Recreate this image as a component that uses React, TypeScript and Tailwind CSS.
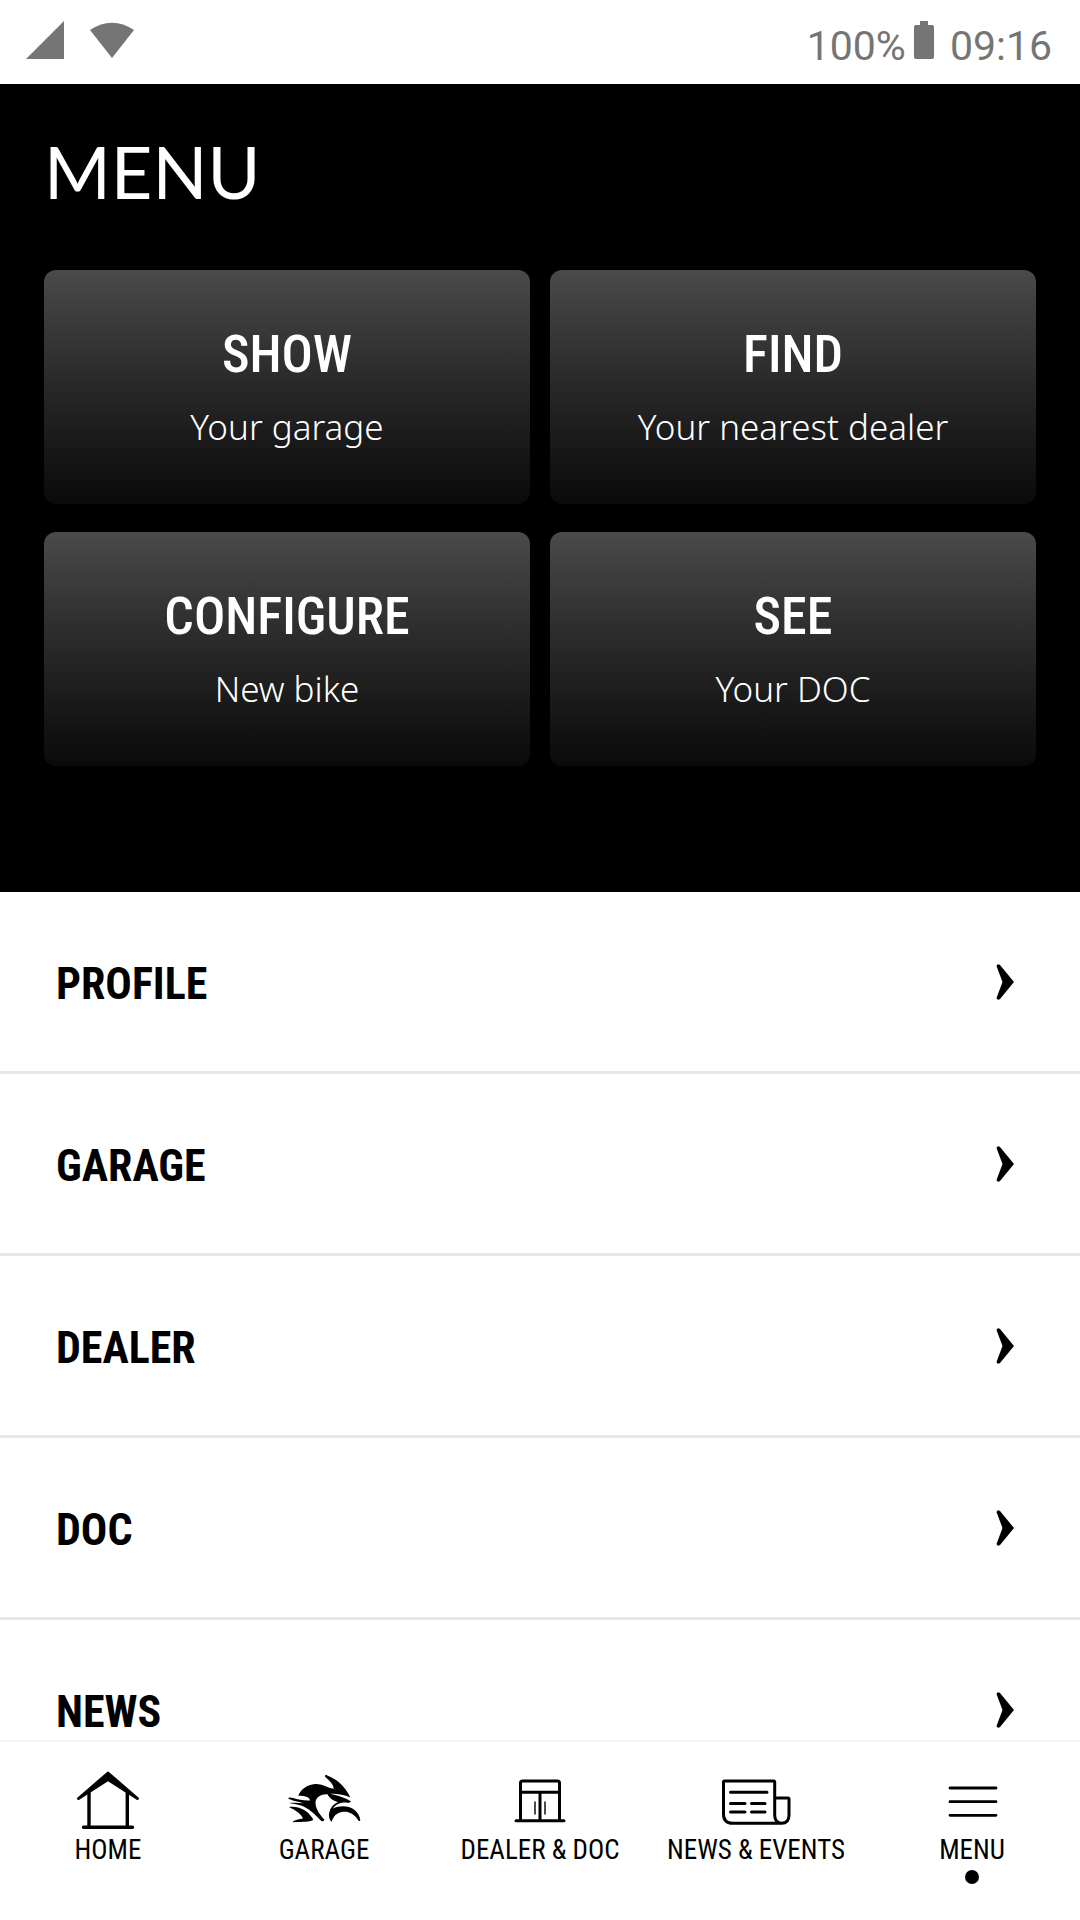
import type { ReactNode } from "react";

const quickLinks = [
  { title: "SHOW", subtitle: "Your garage" },
  { title: "FIND", subtitle: "Your nearest dealer" },
  { title: "CONFIGURE", subtitle: "New bike" },
  { title: "SEE", subtitle: "Your DOC" },
];

const menuItems = ["PROFILE", "GARAGE", "DEALER", "DOC", "NEWS"];

function NavIcon({ children }: { children: ReactNode }) {
  return (
    <svg
      viewBox="0 0 80 70"
      className="h-[70px] w-20"
      fill="none"
      stroke="currentColor"
      strokeWidth="3"
      strokeLinecap="round"
      strokeLinejoin="round"
      aria-hidden="true"
    >
      {children}
    </svg>
  );
}

const tabs = [
  {
    label: "HOME",
    icon: (
      <NavIcon>
        <path d="M40 9 L10.5 34.5 L40 15.5 L69.5 34.5 Z" fill="currentColor" strokeWidth="2.8" />
        <path d="M21 28 V63 M59.3 28 V63 M15.5 63.3 H64.5" strokeWidth="3.4" />
      </NavIcon>
    ),
  },
  {
    label: "GARAGE",
    icon: (
      <NavIcon>
        <g fill="currentColor" stroke="none">
          <path d="M14.3 31.7 C17 25 23 21 31 20 C37 19.5 42 23 49.5 24.8 C50.5 22 46 17 41.3 13 C40.3 11.5 41.5 10.5 43.2 11.5 C54 15.5 62 24 66.3 33.5 C60 30.5 53 29.5 46 29.8 C54 31.5 62 34 67 37.5 C66 39 64 39 62 38.6 C56 38.5 52 40.5 49 44.5 C55 41.5 64 41.2 70 45.5 C74 48.5 76 52.5 76.3 56.5 C75.5 57.5 74.5 57 74 56 C70 49.5 64 47 58 48 C52 49 49.5 52.5 47.5 58 C45.5 55.5 44.3 52.5 45.3 48.5 C46 44 49 40.5 54 38 C49 37 45 33.5 43.5 30.3 C37 30 32 33 31.5 38.5 C31.5 45 36 51 40.3 55.5 C40 57.5 38 57.8 36.5 56.3 C31 50 24 44 17 41.5 C13 40.3 9 39.8 5 39 C10 38.3 15 38.8 20 39.3 C14 37.5 7 36.5 4.3 34.5 C4.5 33 7 33.3 9 34 C14 35.7 20 36.8 26 36.5 C26 33.5 22 31.7 14.3 31.7 Z" />
          <path d="M5 43 C13 42 21 45 26 51 C28 53.5 30 55 28.5 56.5 C23 58.5 16 57.5 9 58.3 C8.5 57 11 56 19 54.5 C17 49.5 11 46 5 43 Z" />
        </g>
      </NavIcon>
    ),
  },
  {
    label: "DEALER & DOC",
    icon: (
      <NavIcon>
        <path d="M20.5 56 V19 Q20.5 17 22.5 17 H57.5 Q59.5 17 59.5 19 V56 M20.5 28.3 H59.5 M40 28.3 V56 M16 56.7 H64" />
        <path d="M35 38 V50 M45 38 V50" strokeWidth="1.4" />
      </NavIcon>
    ),
  },
  {
    label: "NEWS & EVENTS",
    icon: (
      <NavIcon>
        <path d="M58.7 51 V18 Q58.7 17 57.7 17 H8.5 Q7.5 17 7.5 18 V50 Q7.5 59.3 16.5 59.3 H65.5 Q58.7 58.5 58.7 51 M58.7 34 H72 Q73 34 73 35 V51 Q73 59.3 65.5 59.3" />
        <path d="M14.5 28.3 H51 M14.5 39.5 H29 M35.5 39.5 H49 M14.5 48 H29 M35.5 48 H49" />
      </NavIcon>
    ),
  },
  {
    label: "MENU",
    active: true,
    icon: (
      <NavIcon>
        <path d="M18 24 H64 M18 37.7 H64 M18 51.3 H64" strokeWidth="2.8" />
      </NavIcon>
    ),
  },
];

function StatusBar() {
  return (
    <div className="flex h-[84px] shrink-0 items-center justify-between bg-white pr-7 pl-[26px] font-[Roboto,sans-serif] text-[#757575]">
      <div className="flex items-center gap-6 pb-1">
        <svg viewBox="0 0 38 38" className="size-[38px]" fill="currentColor" aria-hidden="true">
          <path d="M0 38 L38 0 V38 Z" />
        </svg>
        <svg viewBox="0 0 48 38" className="h-[38px] w-12" fill="currentColor" aria-hidden="true">
          <path d="M2 9 Q24 -5.5 46 9 L24 37 Z" />
        </svg>
      </div>
      <div className="flex items-center gap-2 text-[41px] leading-[48px]">
        <span className="pt-2">100%</span>
        <svg viewBox="0 0 20 38" className="mb-1 h-[38px] w-5" fill="currentColor" aria-hidden="true">
          <path d="M6 0 H14 V4 H18 Q20 4 20 6 V36 Q20 38 18 38 H2 Q0 38 0 36 V6 Q0 4 2 4 H6 Z" />
        </svg>
        <span className="pt-2 pl-2">09:16</span>
      </div>
    </div>
  );
}

function QuickLinks() {
  return (
    <section className="bg-black px-11 pt-12 pb-[126px] text-white">
      <h1 className="font-[Lato,sans-serif] text-[72px] leading-[78px]">MENU</h1>
      <div className="mt-15 grid grid-cols-2 gap-x-5 gap-y-7">
        {quickLinks.map((link) => (
          <button
            key={link.title}
            type="button"
            className="flex h-[234px] flex-col items-center justify-center gap-3 rounded-xl bg-linear-to-b from-[#4a4a4a] to-[#0a0a0a] pt-2"
          >
            <span className="text-[52px] leading-[60px] font-medium">{link.title}</span>
            <span className="font-['Noto_Sans',sans-serif] text-[35px] leading-[60px] font-light">
              {link.subtitle}
            </span>
          </button>
        ))}
      </div>
    </section>
  );
}

function MenuList() {
  return (
    <ul>
      {menuItems.map((item) => (
        <li key={item} className="border-b-3 border-[#e8e8e8]">
          <a href="#" className="flex h-[179px] items-center justify-between pr-[66px] pl-14 text-black">
            <span className="pt-1 text-[44px] leading-[52px] font-bold">{item}</span>
            <svg viewBox="0 0 18 36" className="h-9 w-[18px]" fill="currentColor" aria-hidden="true">
              <path d="M0.5 2 Q1.5 -0.8 4 1 L18 18 L4 35 Q1.5 36.8 0.5 34 L6.5 18 Z" />
            </svg>
          </a>
        </li>
      ))}
    </ul>
  );
}

function BottomNav() {
  return (
    <nav className="grid shrink-0 grid-cols-5 border-t-2 border-[#f5f5f5] bg-white pt-[22px] pb-9">
      {tabs.map((tab) => (
        <a key={tab.label} href="#" className="flex flex-col items-center text-black">
          {tab.icon}
          <span className="text-[27px] leading-8 whitespace-nowrap">{tab.label}</span>
          <span className={tab.active ? "mt-1 size-3.5 rounded-full bg-black" : "mt-1 size-3.5"} />
        </a>
      ))}
    </nav>
  );
}

export default function App() {
  return (
    <div className="flex h-screen flex-col bg-white font-['Roboto_Condensed',Roboto,sans-serif]">
      <StatusBar />
      <main className="min-h-0 flex-1 overflow-y-auto [scrollbar-width:none]">
        <QuickLinks />
        <MenuList />
      </main>
      <BottomNav />
    </div>
  );
}
